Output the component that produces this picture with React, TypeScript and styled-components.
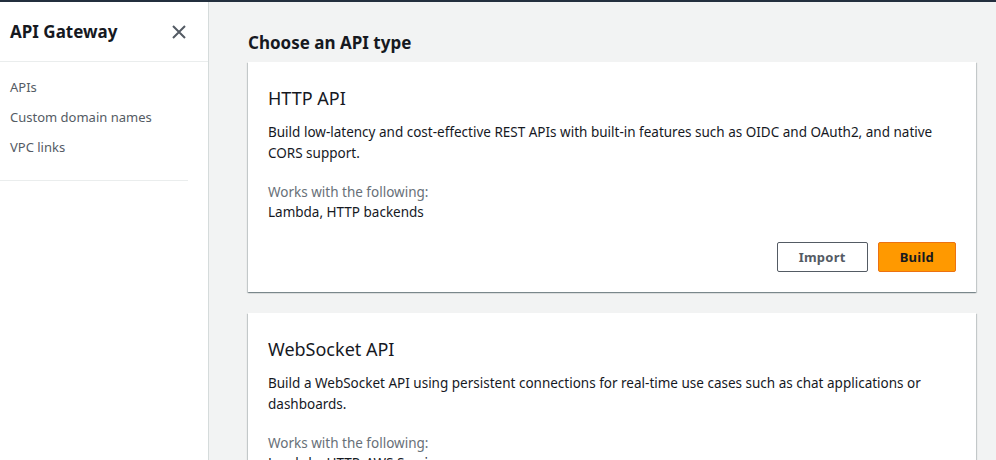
import { FC } from "react"
import styled, { createGlobalStyle } from "styled-components"

const GlobalStyle = createGlobalStyle`
	html, body {
		margin: 0;
		padding: 0;
		height: 100%;
	}
	body {
		font-family: "Noto Sans", "Open Sans", Arial, sans-serif;
		color: #16191f;
		background: #f2f3f3;
		overflow: hidden;
	}
	#root {
		height: 100%;
	}
`

interface ApiType {
	title: string
	description: string
	works: string
	actions: string[]
}

const apiTypes: ApiType[] = [
	{
		title: "HTTP API",
		description:
			"Build low-latency and cost-effective REST APIs with built-in features such as OIDC and OAuth2, and native CORS support.",
		works: "Lambda, HTTP backends",
		actions: ["Import", "Build"],
	},
	{
		title: "WebSocket API",
		description:
			"Build a WebSocket API using persistent connections for real-time use cases such as chat applications or dashboards.",
		works: "Lambda, HTTP, AWS Services",
		actions: ["Build"],
	},
]

const navLinks = ["APIs", "Custom domain names", "VPC links"]

const App: FC = () => {
	return (
		<>
			<GlobalStyle />
			<Page>
				<TopBar />
				<Body>
					<Sidebar>
						<SideHeader>
							<SideTitle>API Gateway</SideTitle>
							<CloseButton aria-label="Close navigation">
								<svg width="14" height="14" viewBox="0 0 14 14">
									<path d="M1 1 L13 13 M13 1 L1 13" stroke="#545b64" strokeWidth="2" fill="none" />
								</svg>
							</CloseButton>
						</SideHeader>
						<NavList>
							{navLinks.map(link => (
								<NavItem key={link}>{link}</NavItem>
							))}
						</NavList>
						<Divider />
					</Sidebar>
					<Main>
						<Heading>Choose an API type</Heading>
						<Cards>
							{apiTypes.map(api => (
								<Card key={api.title}>
									<CardTitle>{api.title}</CardTitle>
									<Description>{api.description}</Description>
									<WorksLabel>Works with the following:</WorksLabel>
									<WorksValue>{api.works}</WorksValue>
									<Actions>
										{api.actions.map(action => (
											<Button key={action} primary={action === "Build"}>
												{action}
											</Button>
										))}
									</Actions>
								</Card>
							))}
						</Cards>
					</Main>
				</Body>
			</Page>
		</>
	)
}
export default App

const Page = styled.div`
	display: flex;
	flex-direction: column;
	height: 100%;
`

const TopBar = styled.div`
	height: 2px;
	background: #232f3e;
	flex-shrink: 0;
`

const Body = styled.div`
	display: flex;
	flex: 1;
	min-height: 0;
`

const Sidebar = styled.nav`
	width: 208px;
	flex-shrink: 0;
	background: #fff;
	border-right: 1px solid #d5dbdb;
`

const SideHeader = styled.div`
	display: flex;
	align-items: center;
	justify-content: space-between;
	height: 59px;
	padding: 0 20px 0 10px;
	border-bottom: 1px solid #eaeded;
`

const SideTitle = styled.h2`
	margin: 0;
	font-size: 17px;
	font-weight: 700;
	color: #16191f;
	line-height: 22px;
`

const CloseButton = styled.button`
	display: flex;
	align-items: center;
	justify-content: center;
	padding: 0;
	border: none;
	background: none;
	cursor: pointer;
	margin-right: 2px;
`

const NavList = styled.ul`
	list-style: none;
	margin: 0;
	padding: 10px 0 15px 10px;
`

const NavItem = styled.li`
	font-size: 13px;
	line-height: 30px;
	color: #545b64;
`

const Divider = styled.hr`
	margin: 3px 20px 0 0;
	border: none;
	border-top: 1px solid #eaeded;
`

const Main = styled.main`
	flex: 1;
	padding: 0 20px 0 39px;
	min-width: 0;
`

const Heading = styled.h1`
	margin: 0;
	padding: 30px 0 9px;
	font-size: 17px;
	font-weight: 700;
	line-height: 21px;
	color: #16191f;
`

const Cards = styled.div`
	display: flex;
	flex-direction: column;
	gap: 21px;
`

const Card = styled.section`
	background: #fff;
	padding: 24px 20px 20px;
	box-shadow: 0 1px 1px 0 rgba(0, 28, 36, 0.3), 1px 1px 1px 0 rgba(0, 28, 36, 0.15),
		-1px 1px 1px 0 rgba(0, 28, 36, 0.15);
`

const CardTitle = styled.h2`
	margin: 0 0 12px;
	font-size: 18px;
	font-weight: 400;
	line-height: 24px;
	color: #16191f;
`

const Description = styled.p`
	margin: 0 0 18px;
	font-size: 13.5px;
	line-height: 21px;
	color: #16191f;
`

const WorksLabel = styled.div`
	font-size: 13.5px;
	line-height: 20px;
	color: #687078;
`

const WorksValue = styled.div`
	font-size: 13.5px;
	line-height: 20px;
	color: #16191f;
`

const Actions = styled.div`
	display: flex;
	justify-content: flex-end;
	gap: 10px;
	margin-top: 20px;
`

const Button = styled.button<{ primary?: boolean }>`
	height: 30px;
	padding: 0 21px;
	border-radius: 2px;
	font-family: inherit;
	font-size: 13px;
	font-weight: 700;
	letter-spacing: 0.25px;
	cursor: pointer;
	border: 1px solid ${p => (p.primary ? "#ec7211" : "#545b64")};
	background: ${p => (p.primary ? "#ff9900" : "#fff")};
	color: ${p => (p.primary ? "#16191f" : "#545b64")};
`
